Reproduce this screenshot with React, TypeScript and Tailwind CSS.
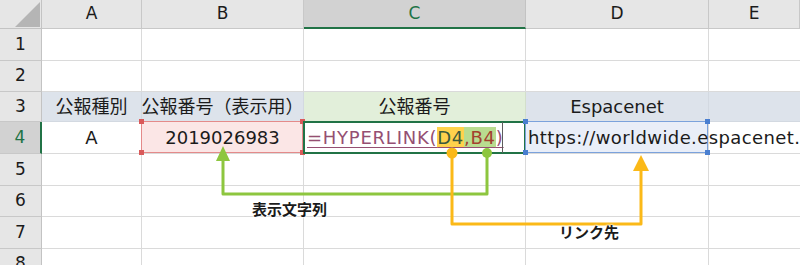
import React from "react";

const font = "font-['DejaVu_Sans','Noto_Sans_CJK_JP',sans-serif]";

// column widths incl. right gridline
const colW = ["w-[100px]", "w-[162px]", "w-[222px]", "w-[183px]", "flex-1"];
const rowH = ["h-[32px]", "h-[31px]", "h-[30px]", "h-[32px]", "h-[32px]", "h-[31px]", "h-[32px]", "h-[31px]"];

function Handles({ bg }: { bg: string }) {
  const sq = `absolute w-[5px] h-[5px] ${bg}`;
  return (
    <>
      <span className={`${sq} -left-[3px] -top-[3px]`} />
      <span className={`${sq} -right-[3px] -top-[3px]`} />
      <span className={`${sq} -left-[3px] -bottom-[3px]`} />
      <span className={`${sq} -right-[3px] -bottom-[3px]`} />
    </>
  );
}

export default function App() {
  const letters = ["A", "B", "C", "D", "E"];

  return (
    <div className={`relative w-[800px] h-[265px] overflow-hidden bg-white text-[#1b1b1b] ${font}`}>
      {/* column headers */}
      <div className="flex h-[29px]">
        <div className="relative w-[42px] bg-[#e6e6e6] border-r border-b border-[#c3c3c3]">
          <svg className="absolute left-0 top-0" width="42" height="29">
            <polygon points="15,27 40,27 40,2" fill="#b5b5b5" />
          </svg>
        </div>
        {letters.map((l, i) =>
          l === "C" ? (
            <div
              key={l}
              className={`${colW[i]} flex items-center justify-center bg-[#d2d2d2] border-r border-[#c3c3c3] border-b-2 border-b-[#217346] text-[17px] text-[#217346] pt-px`}
            >
              {l}
            </div>
          ) : (
            <div
              key={l}
              className={`${colW[i]} flex items-center justify-center bg-[#e6e6e6] border-r border-b border-[#c8c8c8] text-[17px] pb-px`}
            >
              {l}
            </div>
          )
        )}
      </div>

      {/* rows */}
      {rowH.map((h, r) => {
        const n = r + 1;
        const active = n === 4;
        return (
          <div key={n} className={`flex ${h}`}>
            <div
              className={`w-[42px] flex items-center justify-center text-[17px] border-b border-[#c8c8c8] ${
                active
                  ? "bg-[#d2d2d2] text-[#217346] border-r-2 border-r-[#217346]"
                  : "bg-[#e6e6e6] border-r border-r-[#c3c3c3]"
              }`}
            >
              {n}
            </div>

            {n === 3 && (
              <>
                <div className={`${colW[0]} flex items-center justify-center bg-[#dde3eb] border-r border-b border-[#d3d9e1] text-[18px]`}>
                  公報種別
                </div>
                <div className={`${colW[1]} flex items-center justify-center bg-[#dde3eb] border-r border-b border-[#d3d9e1] text-[18px] whitespace-nowrap`}>
                  公報番号（表示用）
                </div>
                <div className={`${colW[2]} flex items-center justify-center bg-[#e2efda] border-r border-b border-[#d3dfcb] text-[18px]`}>
                  公報番号
                </div>
                <div className={`${colW[3]} flex items-center justify-center bg-[#dde3eb] border-r border-b border-[#d3d9e1] text-[18px]`}>
                  Espacenet
                </div>
                <div className={`${colW[4]} bg-[#dde3eb] border-b border-[#d3d9e1]`} />
              </>
            )}

            {n === 4 && (
              <>
                <div className={`${colW[0]} flex items-center justify-center border-r border-b border-[#dadada] text-[18px]`}>
                  A
                </div>
                <div className={`${colW[1]} relative flex items-center justify-center bg-[#fbe6e6] border-r border-b border-[#dadada] text-[18px]`}>
                  <div className="absolute -left-px -top-px right-0 bottom-0 border border-[#e48a8a]">
                    <Handles bg="bg-[#d95a5a]" />
                  </div>
                  <span className="relative">2019026983</span>
                </div>
                <div className={`${colW[2]} relative flex items-center border-r border-b border-[#dadada] text-[18px] whitespace-nowrap`}>
                  <div className="absolute -left-px -top-px -right-px -bottom-px border-2 border-[#217346]" />
                  <span className="relative pl-[3px] underline decoration-1 underline-offset-[3px] text-[#954f72] tracking-[0.75px]">
                    =HYPERLINK(
                    <span className="bg-[#ffd24c] text-[#3b5a3c]">D4</span>
                    <span className="bg-[#b9dc90] text-[#a3402e]">,B4</span>)
                  </span>
                  <div className="absolute left-[198px] top-0 bottom-0 w-px bg-[#5c5c5c]" />
                </div>
                <div className={`${colW[3]} relative flex items-center bg-[#e9eef8] border-r border-b border-[#dadada] text-[18px]`}>
                  <div className="absolute -left-px -top-px right-0 bottom-0 border border-[#7ba2dc]">
                    <Handles bg="bg-[#4a7fd0]" />
                  </div>
                  <span className="relative z-10 pl-[2px] whitespace-nowrap tracking-[0.4px]">
                    https://worldwide.espacenet.
                  </span>
                </div>
                <div className={`${colW[4]} border-b border-[#dadada]`} />
              </>
            )}

            {n !== 3 && n !== 4 &&
              colW.map((w, i) => (
                <div key={i} className={`${w} border-b border-[#dadada] ${i < 4 ? "border-r" : ""}`} />
              ))}
          </div>
        );
      })}

      {/* annotation arrows */}
      <svg className="absolute left-0 top-0 pointer-events-none" width="800" height="265">
        <g fill="none" strokeWidth="3" strokeLinejoin="round">
          <path d="M487 153 V194 H223 V159" stroke="#8dc63f" />
          <path d="M452 153 V224 H641 V169" stroke="#fbb918" />
        </g>
        <circle cx="487" cy="153" r="5" fill="#8dc63f" />
        <polygon points="223,146 216,161 230,161" fill="#8dc63f" />
        <circle cx="452" cy="153" r="5.5" fill="#fbb918" />
        <polygon points="641,155 633,171 649,171" fill="#fbb918" />
      </svg>

      <div className="absolute left-[252px] top-[200px] text-[15px] font-bold leading-[20px] [text-shadow:0_0_2px_#fff,0_0_2px_#fff,0_0_3px_#fff]">
        表示文字列
      </div>
      <div className="absolute left-[559px] top-[223px] text-[15px] font-bold leading-[20px] [text-shadow:0_0_2px_#fff,0_0_2px_#fff,0_0_3px_#fff]">
        リンク先
      </div>
    </div>
  );
}
